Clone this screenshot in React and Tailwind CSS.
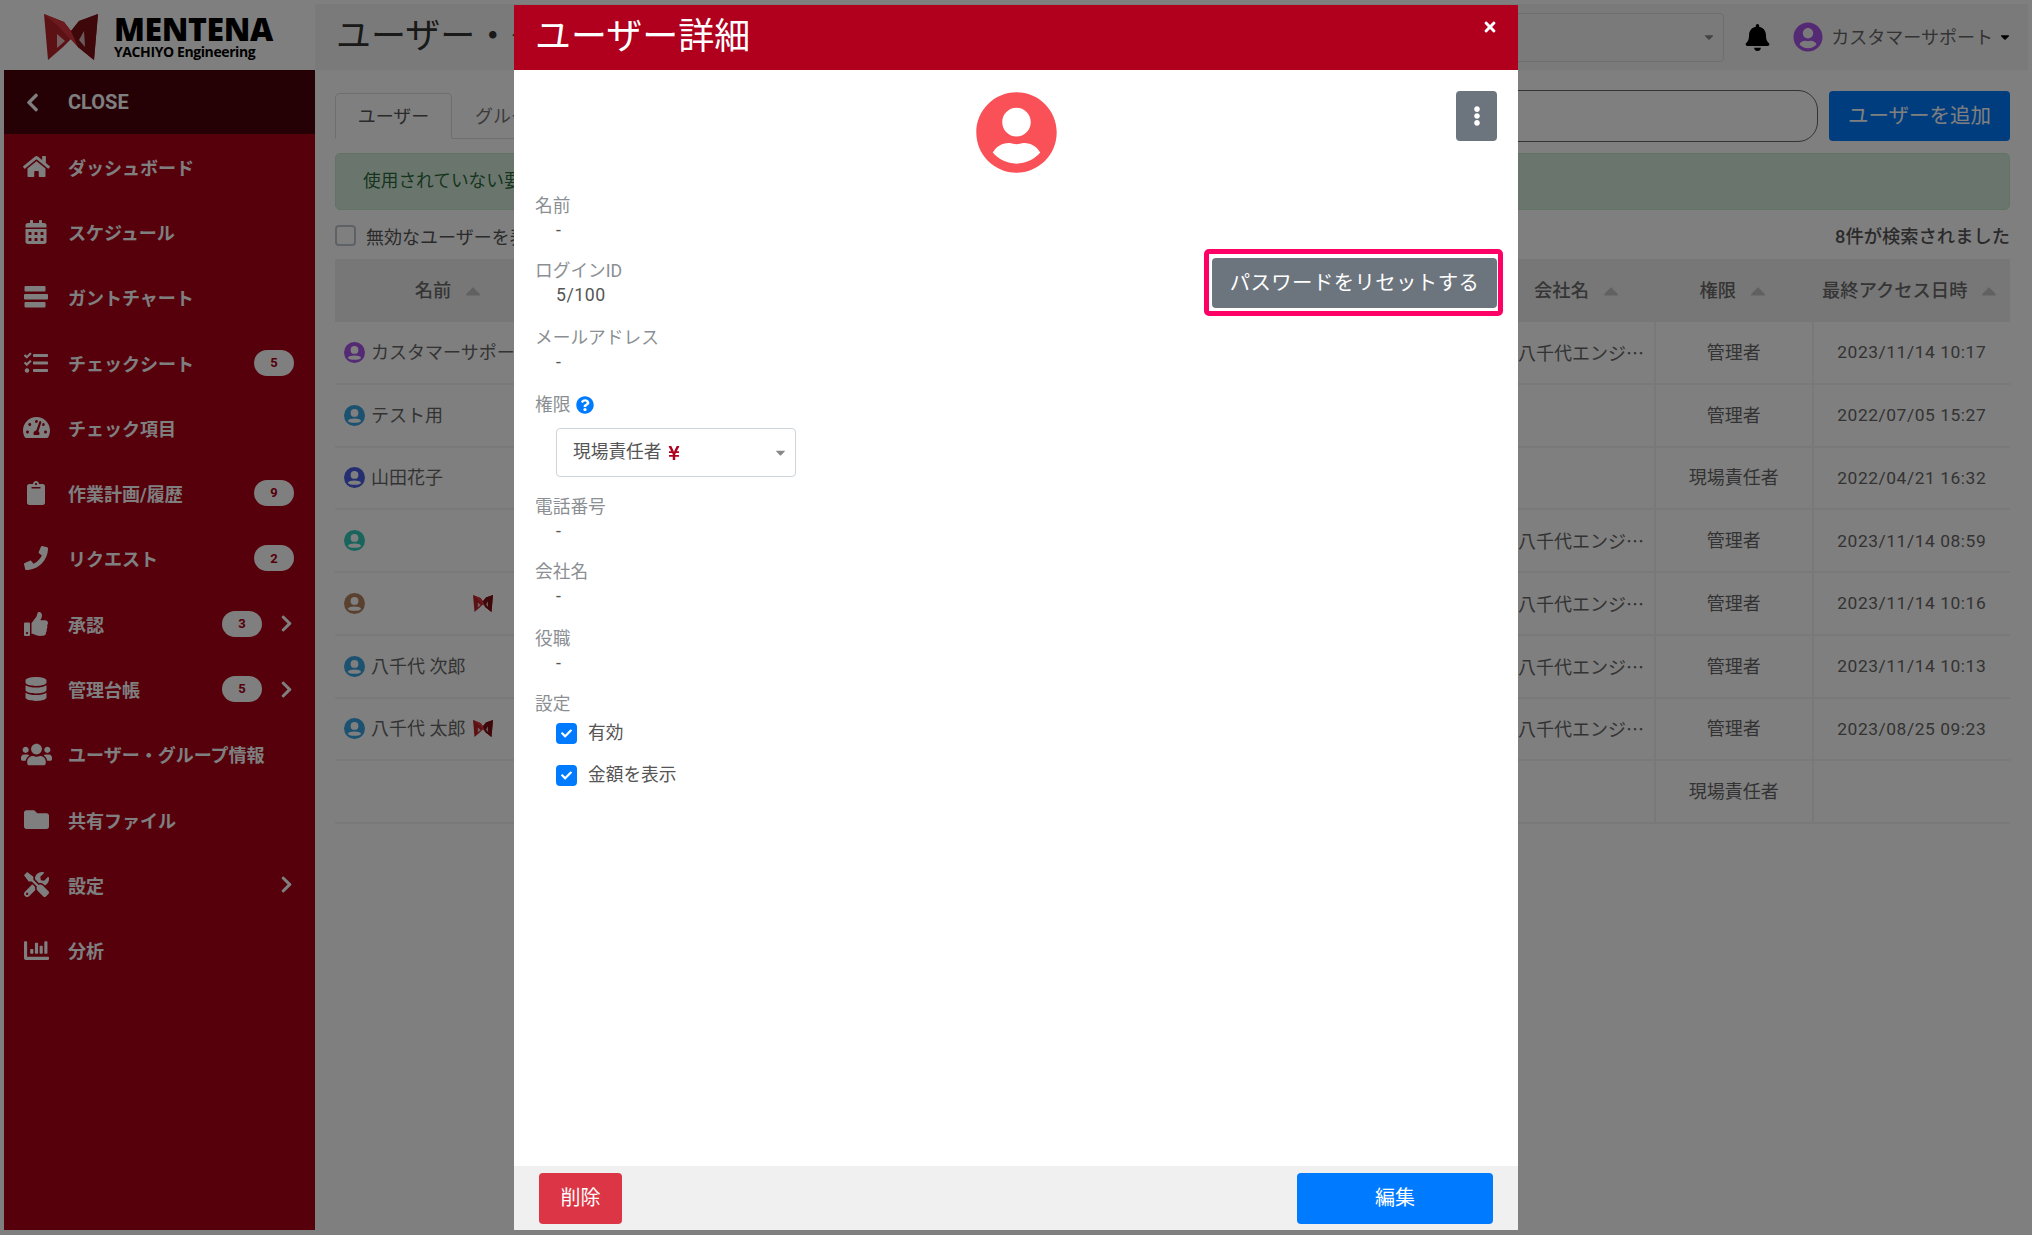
import React from "react";
import {
  FaHome, FaCalendarAlt, FaTasks, FaTachometerAlt, FaClipboard, FaPhone, FaThumbsUp, FaDatabase,
  FaUsers, FaFolder, FaTools, FaChartBar, FaChevronRight, FaChevronLeft, FaBell, FaUserCircle,
  FaQuestionCircle, FaEllipsisV, FaTimes, FaCheck, FaCaretDown, FaCaretUp, FaYenSign,
} from "react-icons/fa";

const FONT = "font-['Roboto','Noto_Sans_CJK_JP',sans-serif]";

function Logo({ className }) {
  return (
    <svg viewBox="0 0 54 46" className={className}>
      <path d="M0 0 L20 8 L27 17 L35 7 L54 0 L50 46 L34 33 L27 25 L19 33 L4 46 Z" fill="#b8242a" />
      <path d="M0 0 L20 8 L50 46 L34 33 L14 12 Z" fill="#d8343a" />
      <path d="M54 0 L35 7 L27 17 L34 33 L50 46 Z" fill="#7c0e14" />
      <path d="M13 20 L21 27 L13 34 Z" fill="#ffffff" opacity="0.7" />
      <path d="M40 17 L41 33 L35 26 Z" fill="#ffffff" opacity="0.7" />
    </svg>
  );
}

function GanttIcon({ className }) {
  return (
    <svg viewBox="0 0 24 22" fill="currentColor" className={className}>
      <rect x="0.5" y="0" width="21" height="5.5" rx="1" />
      <rect x="0" y="8" width="24" height="5.5" rx="1" />
      <rect x="0.5" y="16" width="21" height="5.5" rx="1" />
    </svg>
  );
}

const NAV = [
  { icon: FaHome, size: "text-[27px]", label: "ダッシュボード" },
  { icon: FaCalendarAlt, size: "text-[24px]", label: "スケジュール" },
  { icon: GanttIcon, size: "w-[24px] h-[22px]", label: "ガントチャート" },
  { icon: FaTasks, size: "text-[24px]", label: "チェックシート", badge: "5" },
  { icon: FaTachometerAlt, size: "text-[27px]", label: "チェック項目" },
  { icon: FaClipboard, size: "text-[24px]", label: "作業計画/履歴", badge: "9" },
  { icon: FaPhone, size: "text-[24px]", label: "リクエスト", badge: "2" },
  { icon: FaThumbsUp, size: "text-[24px]", label: "承認", badge: "3", more: true },
  { icon: FaDatabase, size: "text-[24px]", label: "管理台帳", badge: "5", more: true },
  { icon: FaUsers, size: "text-[31px]", label: "ユーザー・グループ情報" },
  { icon: FaFolder, size: "text-[25px]", label: "共有ファイル" },
  { icon: FaTools, size: "text-[25px]", label: "設定", more: true },
  { icon: FaChartBar, size: "text-[25px]", label: "分析" },
];

function Sidebar() {
  return (
    <aside className="w-[311px] shrink-0 flex flex-col">
      <div className="h-[66px] bg-white flex items-center pl-[40px] gap-[16px]">
        <Logo className="w-[54px] h-[46px]" />
        <div className="flex flex-col font-['Open_Sans',sans-serif] text-black">
          <span className="text-[32px] h-[30px] leading-[30px] font-extrabold tracking-[-0.4px]">MENTENA</span>
          <span className="text-[14px] h-[16px] leading-[16px] font-bold tracking-[-0.4px]">YACHIYO Engineering</span>
        </div>
      </div>
      <div className="flex-1 bg-[#aa0016] text-white">
        <div className="h-[64px] bg-[#4a000a] flex items-center">
          <span className="w-[64px] flex justify-center -translate-x-[4px]"><FaChevronLeft className="text-[21px]" /></span>
          <span className="text-[20px] font-bold">CLOSE</span>
        </div>
        {NAV.map((n) => (
          <div key={n.label} className="h-[65.3px] flex items-center font-bold text-[18px]">
            <span className="w-[64px] flex justify-center"><n.icon className={n.size} /></span>
            <span className="flex-1 pt-[3px]">{n.label}</span>
            {n.badge && (
              <span className="w-[40px] h-[26px] rounded-full bg-white text-[#aa0016] text-[13px] flex items-center justify-center">{n.badge}</span>
            )}
            {n.more ? (
              <span className="w-[37px] pl-[15px] mr-[16px]"><FaChevronRight className="text-[19px]" /></span>
            ) : n.badge ? (
              <span className="w-[21px]" />
            ) : null}
          </div>
        ))}
      </div>
    </aside>
  );
}

const COLS = "grid grid-cols-[230px_936px_155px_157.5px_196.5px]";

const ROWS = [
  { c: "#a855e8", name: "カスタマーサポート", co: "八千代エンジ…", role: "管理者", date: "2023/11/14 10:17" },
  { c: "#39a3e0", name: "テスト用", co: "", role: "管理者", date: "2022/07/05 15:27" },
  { c: "#4a5ce0", name: "山田花子", co: "", role: "現場責任者", date: "2022/04/21 16:32" },
  { c: "#33cbbd", name: "", co: "八千代エンジ…", role: "管理者", date: "2023/11/14 08:59" },
  { c: "#b5835f", name: "", logo: true, co: "八千代エンジ…", role: "管理者", date: "2023/11/14 10:16" },
  { c: "#39a3e0", name: "八千代 次郎", co: "八千代エンジ…", role: "管理者", date: "2023/11/14 10:13" },
  { c: "#39a3e0", name: "八千代 太郎", logo: true, co: "八千代エンジ…", role: "管理者", date: "2023/08/25 09:23" },
  { c: null, name: "", co: "", role: "現場責任者", date: "" },
];

function HeadCell({ children }) {
  return (
    <div className="flex items-center justify-center gap-[10px] font-medium text-[#6a6a6a] text-[18.3px]">
      <span>{children}</span>
      <FaCaretUp className="text-[24px] text-[#c2c2c2]" />
    </div>
  );
}

function Main() {
  return (
    <main className="flex-1 min-w-0 flex flex-col bg-white text-[18px]">
      <header className="h-[66px] bg-[#f5f5f5] flex items-center pl-[21px] pr-[16px]">
        <h1 className="text-[35px] text-[#333] font-normal">ユーザー・グループ情報</h1>
        <div className="ml-auto h-[49px] w-[400px] border border-[#ddd] rounded-[4px] flex items-center justify-end pr-[7px]">
          <FaCaretDown className="text-[14px] text-[#888]" />
        </div>
        <FaBell className="ml-[20px] text-[27px] text-black" />
        <FaUserCircle className="ml-[22px] text-[30px] text-[#a855e8]" />
        <span className="ml-[8px] text-[18px] text-[#666]">カスタマーサポート</span>
        <FaCaretDown className="ml-[5px] text-[14px] text-black" />
      </header>
      <div className="px-[20px] pr-[18px] pt-[20px]">
        <div className="flex items-start gap-[11px] h-[52px]">
          <div className="w-[600px] mt-[3px] h-[46px] border-b border-[#ddd] flex">
            <div className="w-[117px] h-[46px] bg-white border border-b-white border-[#ddd] rounded-t-[5px] flex items-center justify-center text-[#555]">ユーザー</div>
            <div className="w-[117px] h-[46px] flex items-center justify-center text-[#777]">グループ</div>
          </div>
          <div className="flex-1 h-[52px] rounded-[20px] border-[1.5px] border-[#666] bg-white" />
          <button className="w-[181px] h-[50px] mt-[1px] rounded-[4px] bg-[#007bff] text-white text-[20.5px]">ユーザーを追加</button>
        </div>
        <div className="mt-[11px] h-[57px] bg-[#d4edda] border border-[#c3e6cb] rounded-[5px] flex items-center px-[27px] text-[#2e6b3d] text-[17.7px]">使用されていない要素があります</div>
        <div className="h-[49px] flex items-center pt-[2px]">
          <span className="w-[21px] h-[21px] border-2 border-[#bcc4cc] rounded-[4px] bg-white" />
          <span className="ml-[10px] pt-[3px] text-[#555]">無効なユーザーを表示</span>
          <span className="ml-auto pt-[3px] font-medium text-[#555] text-[18.3px]">8件が検索されました</span>
        </div>
        <div className={`${COLS} h-[63px] bg-[#efefef]`}>
          <HeadCell>名前</HeadCell>
          <div />
          <HeadCell>会社名</HeadCell>
          <HeadCell>権限</HeadCell>
          <HeadCell>最終アクセス日時</HeadCell>
        </div>
        {ROWS.map((r, i) => (
          <div key={i} className={`${COLS} h-[62.75px] border-b-2 border-[#f2f2f2] text-[#666]`}>
            <div className="flex items-center pl-[9px]">
              {r.c && (
                <svg viewBox="0 0 20 20" className="w-[21px] h-[21px] shrink-0">
                  <circle cx="10" cy="10" r="10" fill={r.c} />
                  <circle cx="10" cy="7.6" r="3.7" fill="#fff" />
                  <path d="M3.6 15.2 C5 12.2 15 12.2 16.4 15.2 C14.5 17.6 5.5 17.6 3.6 15.2 Z" fill="#fff" />
                </svg>
              )}
              <span className="ml-[6px] w-[102px] whitespace-nowrap">{r.name}</span>
              {r.logo && <Logo className="w-[20px] h-[17px]" />}
            </div>
            <div />
            <div className="flex items-center pl-[17px] border-r-2 border-[#f2f2f2] font-['Noto_Sans_CJK_JP',sans-serif]">{r.co}</div>
            <div className="flex items-center justify-center border-r-2 border-[#f2f2f2]">{r.role}</div>
            <div className="flex items-center justify-center text-[17.4px] tracking-[0.55px]">{r.date}</div>
          </div>
        ))}
      </div>
    </main>
  );
}

function Field({ label, value, className }) {
  return (
    <div className={className}>
      <div className="h-[24px] leading-[24px] text-[#8b8f93]">{label}</div>
      {value && <div className="h-[24px] leading-[24px] pl-[21px] text-[#555] tracking-[0.55px]">{value}</div>}
    </div>
  );
}

function Check({ label }) {
  return (
    <div className="h-[42px] pl-[21px] flex items-center gap-[11px] text-[#555]">
      <span className="w-[21px] h-[21px] rounded-[4px] bg-[#007bff] flex items-center justify-center">
        <FaCheck className="text-[11px] text-white" />
      </span>
      <span>{label}</span>
    </div>
  );
}

function Modal() {
  return (
    <div className="absolute inset-0 bg-black/50 flex justify-center pt-[5px] pb-[5px] text-[17.7px]">
      <div className="w-[1004px] bg-white flex flex-col">
        <div className="h-[65px] shrink-0 bg-[#b0001e] flex items-start justify-between pl-[21px] pr-[20px]">
          <h2 className="text-[36px] leading-[64px] text-white font-normal">ユーザー詳細</h2>
          <FaTimes className="mt-[14px] text-[16px] text-white" />
        </div>
        <div className="flex-1 pt-[21px] px-[21px]">
          <div className="grid grid-cols-[41px_1fr_41px]">
            <div />
            <div className="flex justify-center">
              <FaUserCircle className="text-[83px] text-[#f95157]" />
            </div>
            <button className="h-[50px] rounded-[4px] bg-[#6c757d] flex items-center justify-center text-white">
              <FaEllipsisV className="text-[20px]" />
            </button>
          </div>
          <Field label="名前" value="-" className="mt-[20px] h-[65px]" />
          <div className="h-[67px] flex items-start justify-between">
            <Field label="ログインID" value="5/100" />
            <button className="relative w-[285px] h-[50px] -mt-[1px] rounded-[4px] bg-[#6c757d] text-white text-[20.4px] tracking-[0.4px]">
              パスワードをリセットする
              <span className="absolute -left-[8px] -right-[6px] -top-[9px] -bottom-[8px] border-[5px] border-[#ff0066] rounded-[5px]" />
            </button>
          </div>
          <Field label="メールアドレス" value="-" className="h-[67px]" />
          <div className="h-[102px]">
            <div className="h-[24px] leading-[24px] text-[#8b8f93] flex items-center gap-[6px]">
              権限
              <FaQuestionCircle className="text-[18px] text-[#007bff]" />
            </div>
            <div className="mt-[11px] ml-[21px] w-[240px] h-[49px] border border-[#ced4da] rounded-[4px] flex items-center pl-[16px] pr-[7px] text-[#555]">
              <span>現場責任者</span>
              <FaYenSign className="ml-[5px] text-[16px] text-[#b0001e]" />
              <FaCaretDown className="ml-auto text-[15px] text-[#888]" />
            </div>
          </div>
          <Field label="電話番号" value="-" className="h-[65px]" />
          <Field label="会社名" value="-" className="h-[67px]" />
          <Field label="役職" value="-" className="h-[65px]" />
          <div>
            <div className="h-[24px] leading-[24px] text-[#8b8f93]">設定</div>
            <div className="mt-[-4px]">
              <Check label="有効" />
              <Check label="金額を表示" />
            </div>
          </div>
        </div>
        <div className="h-[64px] shrink-0 bg-[#f0f0f0] px-[25px] flex items-center justify-between text-[20px]">
          <button className="w-[83px] h-[51px] rounded-[4px] bg-[#dc3545] text-white">削除</button>
          <button className="w-[196px] h-[51px] rounded-[4px] bg-[#007bff] text-white">編集</button>
        </div>
      </div>
    </div>
  );
}

export default function App() {
  return (
    <div className={`${FONT} relative w-[2032px] h-[1235px] overflow-hidden bg-white pt-[4px] pl-[4px] pr-[4px] pb-[5px] flex text-[17.4px]`}>
      <Sidebar />
      <Main />
      <Modal />
    </div>
  );
}
